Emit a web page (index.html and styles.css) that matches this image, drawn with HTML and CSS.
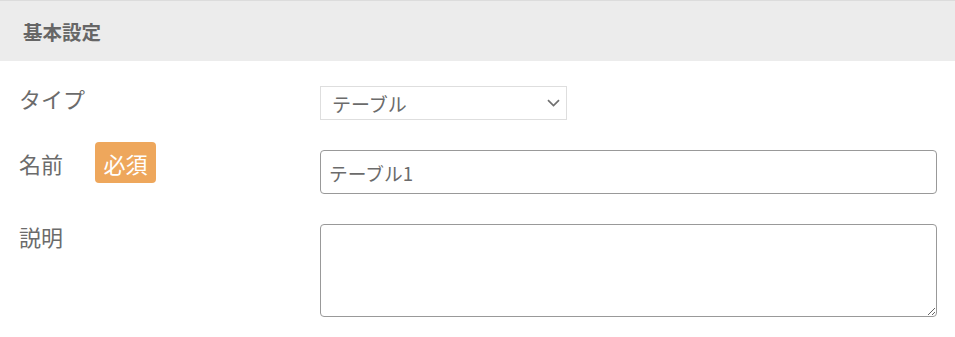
FILE: index.html
```html
<!DOCTYPE html>
<html lang="ja">
<head>
<meta charset="utf-8">
<link rel="stylesheet" href="styles.css">
</head>
<body>
<section class="panel">
  <h2 class="panel-title">基本設定</h2>
  <div class="form">
    <div class="row row-type">
      <div class="label">タイプ</div>
      <div class="field">
        <div class="select">
          <span>テーブル</span>
          <svg class="chevron" width="13" height="8" viewBox="0 0 13 8"><path d="M1 1.2 L6.5 6.5 L12 1.2" fill="none" stroke="#707070" stroke-width="1.7"/></svg>
        </div>
      </div>
    </div>
    <div class="row row-name">
      <div class="label label-flex"><span class="label-text">名前</span><span class="badge">必須</span></div>
      <div class="field"><input class="input" type="text" value="テーブル1"></div>
    </div>
    <div class="row row-desc">
      <div class="label">説明</div>
      <div class="field"><textarea class="textarea"></textarea></div>
    </div>
  </div>
</section>
</body>
</html>
```

FILE: styles.css
```css
html, body {
  margin: 0;
  padding: 0;
  background: #fff;
}
body {
  font-family: "Noto Sans CJK JP", "Noto Sans", sans-serif;
  color: #6b6b6b;
}
.panel {
  width: 955px;
}
.panel-title {
  margin: 0;
  height: 60px;
  border-top: 1px solid #dcdcdc;
  background: #ececec;
  display: flex;
  align-items: center;
  padding-left: 23px;
  font-size: 19.5px;
  font-weight: bold;
  color: #666;
  box-sizing: content-box;
}
.form {
  padding: 25px 18px 0 19px;
}
.row {
  display: grid;
  grid-template-columns: 301px 1fr;
  align-items: start;
}
.label {
  font-size: 22px;
  line-height: 28px;
  margin-top: -2px;
  color: #6b6b6b;
}
.row-name {
  margin-top: 22px;
}
.row-desc {
  margin-top: 30px;
}
.label-flex {
  margin-top: 0;
  display: flex;
  align-items: center;
  height: 41px;
}
.label-text {
  padding-top: 1px;
}
.badge {
  margin-left: 32px;
  width: 61px;
  height: 41px;
  border-radius: 4px;
  background: #eea75c;
  color: #fff;
  font-size: 22px;
  display: flex;
  align-items: center;
  justify-content: center;
}
.select {
  width: 247px;
  height: 34px;
  box-sizing: border-box;
  border: 1px solid #dedede;
  display: flex;
  align-items: center;
  justify-content: space-between;
  padding: 0 6px 0 11px;
  font-size: 19px;
  color: #6b6b6b;
}
.chevron {
  display: block;
}
.input {
  display: block;
  margin-top: 8px;
  width: 100%;
  height: 44px;
  box-sizing: border-box;
  border: 1px solid #999;
  border-radius: 4px;
  padding: 0 8px;
  font-family: "Noto Sans CJK JP", "Noto Sans", sans-serif;
  font-size: 18.7px;
  color: #6b6b6b;
  outline: none;
}
.textarea {
  display: block;
  width: 100%;
  height: 93px;
  box-sizing: border-box;
  border: 1px solid #999;
  border-radius: 4px;
  padding: 6px 9px;
  font-family: "Noto Sans CJK JP", "Noto Sans", sans-serif;
  font-size: 18px;
  color: #6b6b6b;
  outline: none;
}
```
